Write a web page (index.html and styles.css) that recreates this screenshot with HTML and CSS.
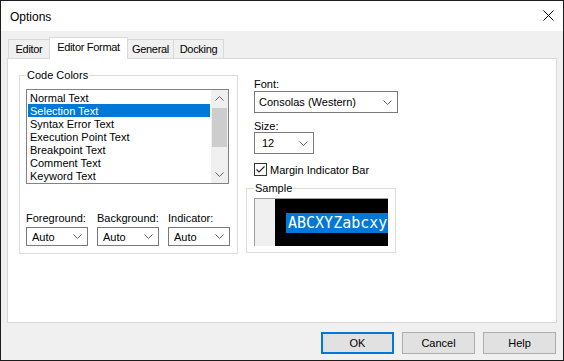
FILE: index.html
```html
<!DOCTYPE html>
<html lang="en">
<head>
  <meta charset="UTF-8">
  <title>Options</title>
  <link rel="stylesheet" href="styles.css">
</head>
<body>
  <div class="window">
    <div class="titlebar">
      <span class="title">Options</span>
      <svg class="close" width="11" height="11" viewBox="0 0 11 11">
        <path d="M0.5 0.5 L10.5 10.5 M10.5 0.5 L0.5 10.5" stroke="#000" stroke-width="1" fill="none"/>
      </svg>
    </div>

    <div class="main">
      <div class="tabs">
        <div class="tab tab-editor">Editor</div>
        <div class="tab active">Editor Format</div>
        <div class="tab tab-general">General</div>
        <div class="tab tab-docking">Docking</div>
      </div>

      <div class="panel">
        <fieldset class="group colors">
          <legend>Code Colors</legend>
          <div class="listbox">
            <ul class="items">
              <li>Normal Text</li>
              <li class="selected">Selection Text</li>
              <li>Syntax Error Text</li>
              <li>Execution Point Text</li>
              <li>Breakpoint Text</li>
              <li>Comment Text</li>
              <li>Keyword Text</li>
            </ul>
            <div class="scrollbar">
              <div class="arrow">
                <svg width="9" height="5" viewBox="0 0 9 5"><path d="M0.5 4.5 L4.5 0.5 L8.5 4.5" stroke="#606060" fill="none"/></svg>
              </div>
              <div class="track"><div class="thumb"></div></div>
              <div class="arrow">
                <svg width="9" height="5" viewBox="0 0 9 5"><path d="M0.5 0.5 L4.5 4.5 L8.5 0.5" stroke="#606060" fill="none"/></svg>
              </div>
            </div>
          </div>

          <div class="pickers">
            <div class="picker">
              <span class="label">Foreground:</span>
              <div class="combo small">
                <span>Auto</span>
                <svg width="9" height="5" viewBox="0 0 9 5"><path d="M0.5 0.5 L4.5 4.5 L8.5 0.5" stroke="#606060" fill="none"/></svg>
              </div>
            </div>
            <div class="picker">
              <span class="label">Background:</span>
              <div class="combo small">
                <span>Auto</span>
                <svg width="9" height="5" viewBox="0 0 9 5"><path d="M0.5 0.5 L4.5 4.5 L8.5 0.5" stroke="#606060" fill="none"/></svg>
              </div>
            </div>
            <div class="picker">
              <span class="label">Indicator:</span>
              <div class="combo small">
                <span>Auto</span>
                <svg width="9" height="5" viewBox="0 0 9 5"><path d="M0.5 0.5 L4.5 4.5 L8.5 0.5" stroke="#606060" fill="none"/></svg>
              </div>
            </div>
          </div>
        </fieldset>

        <div class="side">
          <span class="label font-label">Font:</span>
          <div class="combo font-combo">
            <span>Consolas (Western)</span>
            <svg width="9" height="5" viewBox="0 0 9 5"><path d="M0.5 0.5 L4.5 4.5 L8.5 0.5" stroke="#606060" fill="none"/></svg>
          </div>
          <span class="label size-label">Size:</span>
          <div class="combo size-combo">
            <span>12</span>
            <svg width="9" height="5" viewBox="0 0 9 5"><path d="M0.5 0.5 L4.5 4.5 L8.5 0.5" stroke="#606060" fill="none"/></svg>
          </div>
          <div class="check">
            <span class="box">
              <svg width="11" height="11" viewBox="0 0 11 11"><path d="M1.5 5.5 L4 8 L9.5 2.5" stroke="#222" stroke-width="1.1" fill="none"/></svg>
            </span>
            <span>Margin Indicator Bar</span>
          </div>

          <fieldset class="group sample">
            <legend>Sample</legend>
            <div class="preview">
              <div class="gutter"></div>
              <div class="code"><span class="sel">ABCXYZabcxy</span></div>
            </div>
          </fieldset>
        </div>
      </div>

      <div class="actions">
        <button class="btn default">OK</button>
        <button class="btn">Cancel</button>
        <button class="btn">Help</button>
      </div>
    </div>
  </div>
</body>
</html>
```

FILE: styles.css
```css
:root {
  --win-bg: #f0f0f0;
  --win-border: #1c1c1c;
  --group-border: #dcdcdc;
  --tab-border: #d9d9d9;
  --field-border: #7a7a7a;
  --accent: #0078d7;
}

* {
  box-sizing: border-box;
}

body {
  margin: 0;
  font-family: "Liberation Sans", Arial, sans-serif;
  font-size: 11px;
  color: #000;
  background: var(--win-bg);
}

.window {
  width: 564px;
  height: 361px;
  border: 1px solid var(--win-border);
  background: var(--win-bg);
  display: flex;
  flex-direction: column;
}

.titlebar {
  height: 30px;
  flex-shrink: 0;
  background: #fff;
  display: flex;
  align-items: center;
  justify-content: space-between;
  padding: 0 9px 0 9px;
}

.title {
  font-size: 12px;
  margin-top: 1px;
}

.close {
  margin-top: -2px;
}

.main {
  flex: 1;
  display: flex;
  flex-direction: column;
  padding: 6px 6px 6px 6px;
}

/* tab strip */
.tabs {
  display: flex;
  align-items: flex-end;
  height: 21px;
  padding-left: 1px;
  position: relative;
  z-index: 1;
}

.tab {
  height: 19px;
  line-height: 18px;
  padding: 0;
  text-align: center;
  white-space: nowrap;
  letter-spacing: -0.3px;
  border: 1px solid var(--tab-border);
  border-bottom: none;
  background: var(--win-bg);
  margin-left: -1px;
}

.tab-editor {
  width: 42px;
  margin-left: 0;
}

.tab-general {
  width: 47px;
}

.tab-docking {
  width: 51px;
}

.tab.active {
  width: 79px;
  height: 22px;
  line-height: 18px;
  margin-bottom: -1px;
  background: #fff;
  position: relative;
  z-index: 2;
}

.panel {
  height: 265px;
  border: 1px solid var(--tab-border);
  background: #fff;
  display: flex;
  align-items: flex-start;
  padding-left: 11px;
}

/* group boxes */
.group {
  margin: 0;
  border: 1px solid var(--group-border);
  padding: 7px 7px 6px 6px;
}

.group legend {
  padding: 0 1px;
  line-height: 13px;
}

.colors {
  width: 218px;
  margin-top: 10px;
  padding-bottom: 7px;
}

/* list box */
.listbox {
  width: 203px;
  height: 95px;
  border: 1px solid #828282;
  display: flex;
}

.items {
  flex: 1;
  list-style: none;
  margin: 0;
  padding: 1px;
}

.items li {
  height: 13px;
  line-height: 14px;
  padding-left: 2px;
  white-space: nowrap;
}

.items li.selected {
  background: var(--accent);
  color: #fff;
}

.scrollbar {
  width: 17px;
  background: var(--win-bg);
  display: flex;
  flex-direction: column;
}

.arrow {
  height: 17px;
  display: flex;
  align-items: center;
  justify-content: center;
}

.track {
  flex: 1;
  padding: 1px 1px 0 1px;
}

.thumb {
  height: 39px;
  background: #cdcdcd;
}

/* colour pickers */
.pickers {
  display: flex;
  gap: 9px;
  margin-top: 28px;
}

.picker {
  display: flex;
  flex-direction: column;
  gap: 2px;
}

.label {
  display: block;
  line-height: 13px;
  white-space: nowrap;
}

.combo {
  display: flex;
  align-items: center;
  justify-content: space-between;
  border: 1px solid var(--field-border);
  background: #fff;
  padding: 0 5px 0 5px;
  white-space: nowrap;
}

.combo.small {
  width: 62px;
  height: 19px;
}

/* right column */
.side {
  margin-left: 8px;
  display: flex;
  flex-direction: column;
  align-items: flex-start;
}

.side > .label,
.side > .combo,
.side > .check {
  margin-left: 8px;
}

.font-label {
  margin-top: 19px;
  line-height: 12px;
}

.font-combo {
  width: 144px;
  height: 22px;
  margin-top: 1px;
  padding-left: 4px;
}

.size-label {
  margin-top: 7px;
  line-height: 12px;
}

.size-combo {
  width: 60px;
  height: 22px;
  padding-left: 7px;
}

.check {
  display: flex;
  align-items: center;
  gap: 3px;
  margin-top: 9px;
  height: 13px;
}

.box {
  width: 13px;
  height: 13px;
  border: 1px solid #333;
  background: #fff;
  display: flex;
}

.sample {
  width: 150px;
  margin-top: 6px;
  padding: 3px 7px 6px 7px;
}

.preview {
  width: 134px;
  height: 48px;
  border-top: 1px solid #a0a0a0;
  border-left: 1px solid #a0a0a0;
  display: flex;
}

.gutter {
  width: 20px;
  background: var(--win-bg);
}

.code {
  flex: 1;
  background: #000;
  overflow: hidden;
  padding: 14px 0 0 11px;
}

.sel {
  display: block;
  background: var(--accent);
  color: #fff;
  font-family: "DejaVu Sans Mono", "Liberation Mono", monospace;
  font-size: 15px;
  line-height: 20px;
  padding-left: 2px;
  white-space: nowrap;
}

/* dialog buttons */
.actions {
  display: flex;
  justify-content: flex-end;
  gap: 8px;
  margin-top: 9px;
  padding-right: 1px;
}

.btn {
  width: 73px;
  height: 22px;
  font: inherit;
  color: #000;
  background: #e1e1e1;
  border: 1px solid #adadad;
  padding: 0;
}

.btn.default {
  border: 2px solid var(--accent);
}
```
